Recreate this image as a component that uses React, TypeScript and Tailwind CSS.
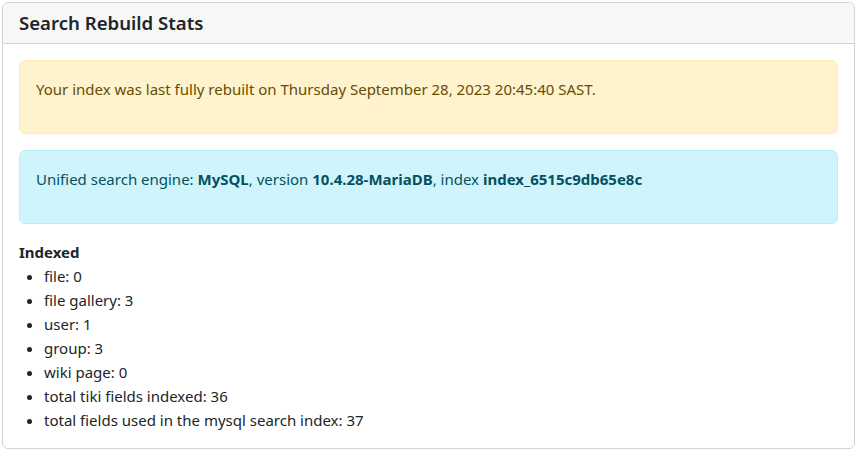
export default function App() {
  const items = [
    "file: 0",
    "file gallery: 3",
    "user: 1",
    "group: 3",
    "wiki page: 0",
    "total tiki fields indexed: 36",
    "total fields used in the mysql search index: 37",
  ];
  return (
    <div className="p-[2px] bg-white text-[15px] leading-[24px] text-[#212529]" style={{ fontFamily: '"Noto Sans", sans-serif' }}>
      <div className="border border-[#d3d3d3] rounded-[6px] overflow-hidden h-[447px]">
        <div className="bg-[#f7f7f7] border-b border-[#d3d3d3] px-4 py-2 h-[41px]">
          <h5 className="text-[18.6px] leading-[24px] font-semibold text-[#212529]">Search Rebuild Stats</h5>
        </div>
        <div className="p-4">
          <div className="bg-[#fff3cd] border border-[#ffecb5] rounded-[6px] text-[#664d03] px-4 pt-4 pb-8 mb-4">
            <p>Your index was last fully rebuilt on Thursday September 28, 2023 20:45:40 SAST.</p>
          </div>
          <div className="bg-[#cff4fc] border border-[#b6effb] rounded-[6px] text-[#055160] px-4 pt-4 pb-8 mb-4">
            <p>
              Unified search engine: <b className="font-bold">MySQL</b>, version <b className="font-bold">10.4.28-MariaDB</b>, index <b className="font-bold">index_6515c9db65e8c</b>
            </p>
          </div>
          <div className="font-bold">Indexed</div>
          <ul className="list-disc pl-[25px]">
            {items.map((t) => (
              <li key={t}>{t}</li>
            ))}
          </ul>
        </div>
      </div>
    </div>
  );
}
